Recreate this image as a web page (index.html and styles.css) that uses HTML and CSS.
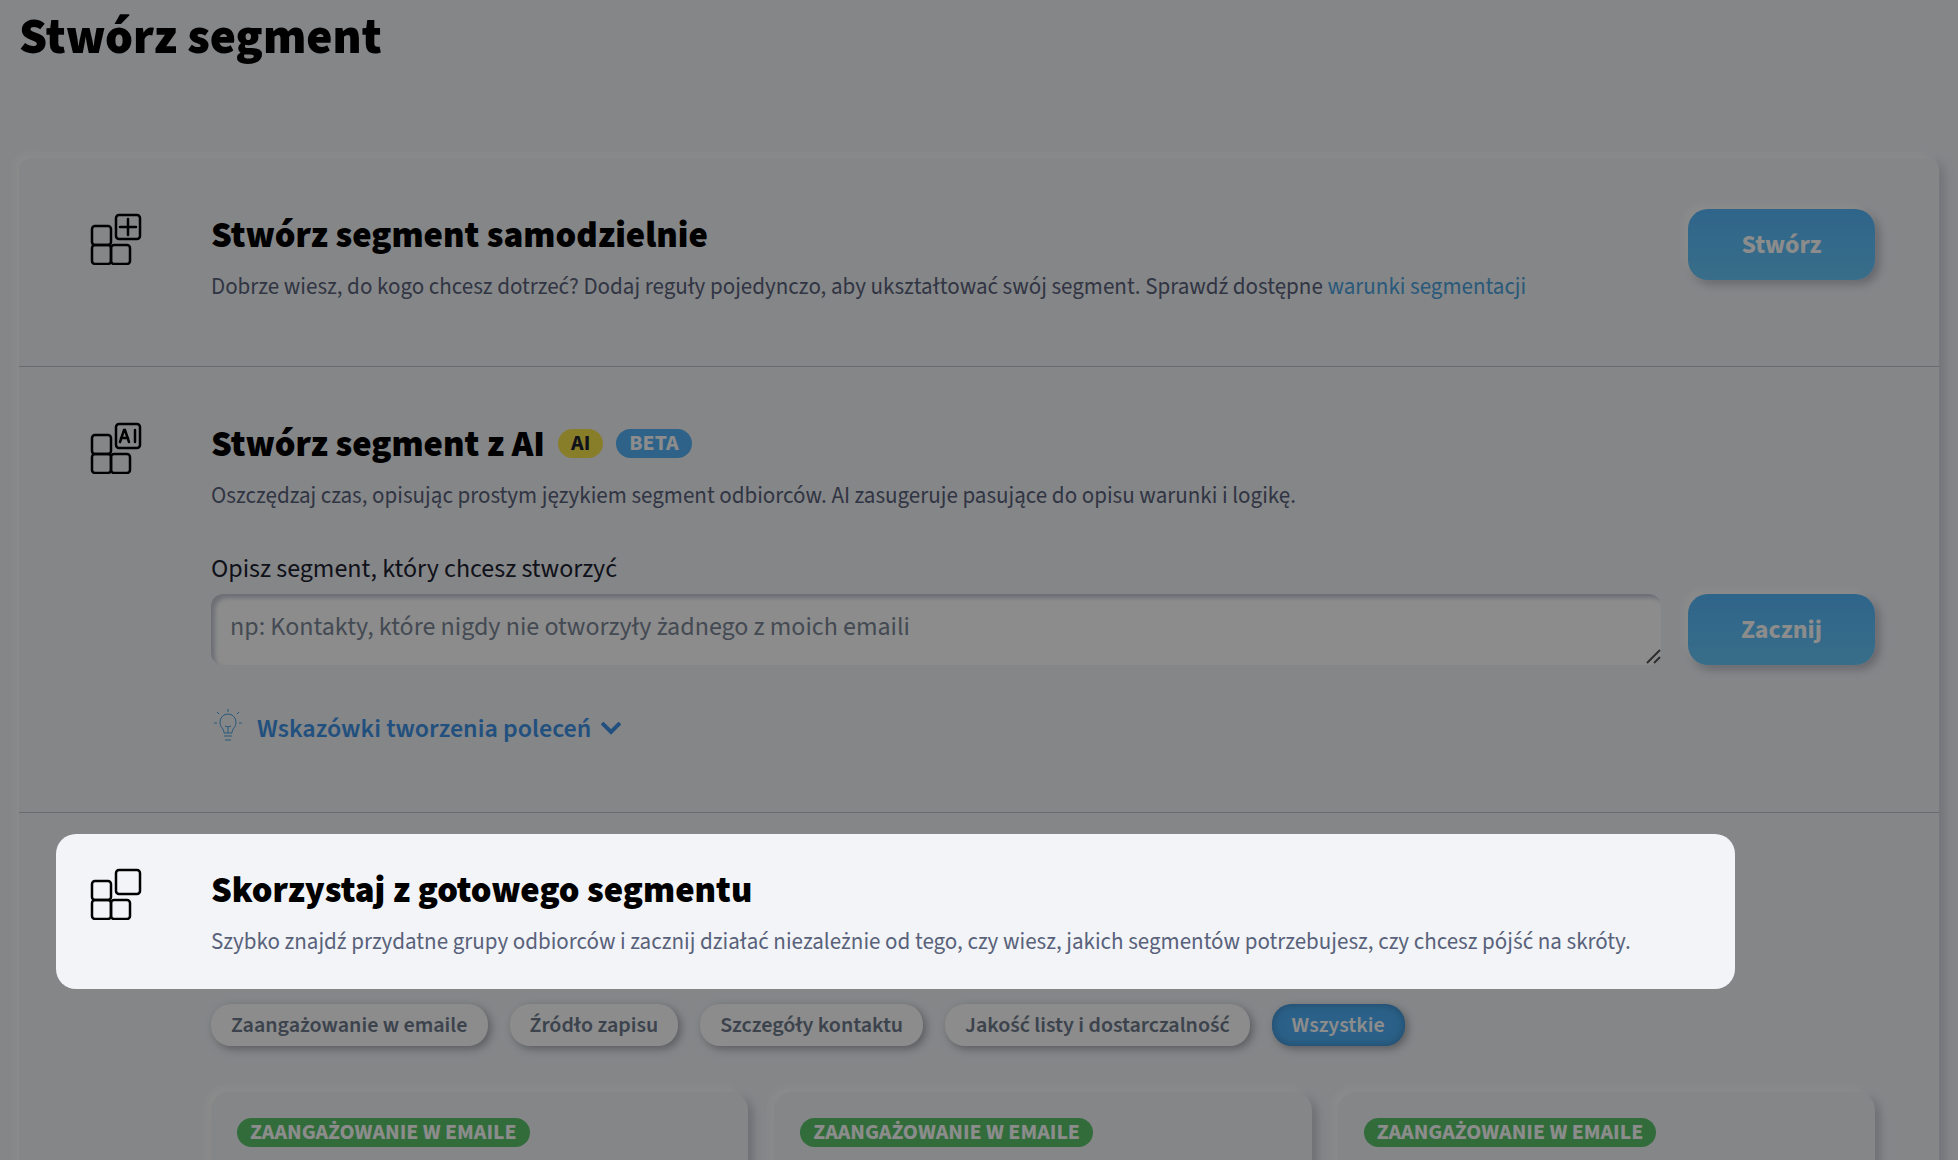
FILE: index.html
```html
<!DOCTYPE html>
<html lang="pl">
  <head>
    <meta charset="utf-8">
    <title>Stwórz segment</title>
    <link rel="stylesheet" href="styles.css">
  </head>
  <body>
    <h1 class="page-title">Stwórz segment</h1>
    <main class="panel">
      <section class="option">
        <svg class="option-icon" viewBox="0 0 52 52" aria-hidden="true">
          <rect x="2" y="13" width="19" height="19" rx="3"/>
          <rect x="2" y="32" width="19" height="19" rx="3"/>
          <rect x="21" y="32" width="19" height="19" rx="3"/>
          <rect x="26" y="2" width="24" height="24" rx="3"/>
          <path d="M38 6v16M30 14h16"/>
        </svg>
        <div class="option-text">
          <h2>Stwórz segment samodzielnie</h2>
          <p>Dobrze wiesz, do kogo chcesz dotrzeć? Dodaj reguły pojedynczo, aby ukształtować swój segment. Sprawdź dostępne <a href="#">warunki segmentacji</a></p>
        </div>
        <button class="button" type="button">Stwórz</button>
      </section>

      <section class="option option-ai">
        <svg class="option-icon" viewBox="0 0 52 52" aria-hidden="true">
          <rect x="2" y="13" width="19" height="19" rx="3"/>
          <rect x="2" y="32" width="19" height="19" rx="3"/>
          <rect x="21" y="32" width="19" height="19" rx="3"/>
          <rect x="26" y="2" width="24" height="24" rx="3"/>
          <path d="M30 20l4-12h1l4 12M31 16h7M45 8v12"/>
        </svg>
        <div class="option-text">
          <h2>Stwórz segment z AI <span class="tag tag-ai">AI</span> <span class="tag tag-beta">BETA</span></h2>
          <p>Oszczędzaj czas, opisując prostym językiem segment odbiorców. AI zasugeruje pasujące do opisu warunki i logikę.</p>
          <label class="field-label" for="segmentPrompt">Opisz segment, który chcesz stworzyć</label>
          <div class="prompt-row">
            <div class="prompt-box">
              <textarea class="prompt" id="segmentPrompt" rows="1" placeholder="np: Kontakty, które nigdy nie otworzyły żadnego z moich emaili"></textarea>
              <svg class="grip" viewBox="0 0 16 16" aria-hidden="true"><path d="M2 14L15 1M9 14l6-6"/></svg>
            </div>
            <button class="button" type="button">Zacznij</button>
          </div>
          <button class="tips" type="button">
            <svg class="bulb" viewBox="0 0 32 34" aria-hidden="true">
              <path d="M13 24c0-5-4-5-4-11a8 8 0 0 1 16 0c0 6-4 6-4 11zM13 27h8M14 31h6M17 24v-6M14 17l3 1 3-1M17 0v3M6 3l2 2M28 3l-2 2M3 14h3M28 14h3"/>
            </svg>
            Wskazówki tworzenia poleceń
            <svg class="chevron" viewBox="0 0 20 14" aria-hidden="true"><path d="M1 1l9 9 9-9"/></svg>
          </button>
        </div>
      </section>

      <section class="option option-ready">
        <svg class="option-icon" viewBox="0 0 52 52" aria-hidden="true">
          <rect x="2" y="13" width="19" height="19" rx="3"/>
          <rect x="2" y="32" width="19" height="19" rx="3"/>
          <rect x="21" y="32" width="19" height="19" rx="3"/>
          <rect x="26" y="2" width="24" height="24" rx="3"/>
        </svg>
        <div class="option-text">
          <h2>Skorzystaj z gotowego segmentu</h2>
          <p>Szybko znajdź przydatne grupy odbiorców i zacznij działać niezależnie od tego, czy wiesz, jakich segmentów potrzebujesz, czy chcesz pójść na skróty.</p>
          <div class="filters">
            <button class="chip" type="button">Zaangażowanie w emaile</button>
            <button class="chip" type="button">Źródło zapisu</button>
            <button class="chip" type="button">Szczegóły kontaktu</button>
            <button class="chip" type="button">Jakość listy i dostarczalność</button>
            <button class="chip chip-active" type="button">Wszystkie</button>
          </div>
          <div class="cards">
            <article class="card"><span class="tag tag-category">ZAANGAŻOWANIE W EMAILE</span></article>
            <article class="card"><span class="tag tag-category">ZAANGAŻOWANIE W EMAILE</span></article>
            <article class="card"><span class="tag tag-category">ZAANGAŻOWANIE W EMAILE</span></article>
          </div>
        </div>
        <div class="spotlight"></div>
      </section>
    </main>
  </body>
</html>
```

FILE: styles.css
```css
*{
  box-sizing: border-box;
}
body{
  margin: 0;
  padding: 0 19px;
  height: 100vh;
  overflow: hidden;
  background-color: #f2f4f8;
  color: #1c2230;
  font-family: "Source Sans Pro", "Source Sans 3", "Noto Sans", sans-serif;
  font-size: 26px;
}
h1, h2, p{
  margin: 0;
}
button, textarea{
  font-family: inherit;
}
.page-title{
  color: black;
  font-size: 50px;
  font-weight: 900;
  line-height: 76px;
  margin-bottom: 82px;
}

.panel{
  border-radius: 12px;
  box-shadow: -4px -4px 8px #fff, 4px 4px 12px #c3c7d3;
}
.option{
  position: relative;
  display: flex;
  align-items: flex-start;
  min-height: 209px;
  padding: 51px 64px 0 71px;
  border-bottom: 1px solid #c0c3c9;
}
.option-ai{
  min-height: 446px;
}
.option-ready{
  border-bottom: none;
}
.option-icon{
  flex: none;
  width: 52px;
  height: 52px;
  margin: 4px 69px 0 0;
  fill: none;
  stroke: black;
  stroke-width: 2.500;
  stroke-linecap: round;
}
.option-text{
  flex: 1;
}
h2{
  display: flex;
  align-items: center;
  gap: 13px;
  color: black;
  font-size: 37px;
  font-weight: 900;
  line-height: 54px;
}
h2 .tag{
  margin-bottom: 4px;
}
p{
  color: #59627a;
  font-size: 23px;
  line-height: 32px;
  margin-top: 8px;
}
a{
  color: #4ba3df;
  text-decoration: none;
}

.button{
  flex: none;
  height: 71px;
  min-width: 187px;
  padding: 0 50px;
  border: none;
  border-radius: 20px;
  background: linear-gradient(#56b8fb, #67c8fa);
  box-shadow: -4px -4px 8px #fff, 4px 4px 10px #b4b6c2;
  color: white;
  font-size: 26px;
  font-weight: bold;
  cursor: pointer;
}
.tag{
  padding: 0 13px;
  border-radius: 15px;
  font-size: 22px;
  font-weight: bold;
  line-height: 29px;
}
.tag-ai{
  background-color: #f7e64c;
  color: #1c2230;
}
.tag-beta{
  background-color: #56b3f8;
  color: white;
}
.tag-category{
  background-color: #5bc56c;
  color: white;
}

.field-label{
  display: block;
  margin-top: 39px;
  line-height: 36px;
}
.prompt-row{
  display: flex;
  gap: 27px;
  margin-top: 7px;
}
.prompt-box{
  position: relative;
  flex: 1;
}
.prompt{
  display: block;
  width: 100%;
  height: 71px;
  padding: 15px 19px;
  border: none;
  border-radius: 12px;
  background-color: white;
  box-shadow: inset 4px 4px 4px #c6cad6;
  font-size: 26px;
  line-height: 36px;
  resize: none;
}
.prompt::placeholder{
  color: #7c8797;
}
.grip{
  position: absolute;
  right: 0;
  bottom: 0;
  width: 16px;
  height: 16px;
  fill: none;
  stroke: #555;
  stroke-width: 2;
}
.tips{
  display: flex;
  align-items: center;
  margin-top: 44px;
  padding: 0;
  border: none;
  background: none;
  color: #3f93e6;
  font-size: 26px;
  font-weight: 600;
  line-height: 36px;
  cursor: pointer;
}
.bulb, .chevron{
  fill: none;
  stroke: currentColor;
}
.bulb{
  width: 32px;
  height: 34px;
  margin: 0 14px 5px 0;
  stroke: #4ba3df;
}
.chevron{
  width: 20px;
  height: 14px;
  margin-left: 10px;
  stroke-width: 4;
}

.filters{
  display: flex;
  flex-wrap: wrap;
  gap: 22px;
  margin-top: 46px;
}
.chip{
  height: 42px;
  padding: 0 20px;
  border: none;
  border-radius: 20px;
  background-color: white;
  box-shadow: 3px 3px 8px #a5a7ae;
  color: #6d7a8c;
  font-size: 22px;
  font-weight: 600;
  cursor: pointer;
}
.chip-active{
  background-color: #4fb0f7;
  box-shadow: inset 0 0 10px #3b83bc, 3px 3px 8px #a5a7ae;
  color: white;
}
.cards{
  display: grid;
  grid-template-columns: repeat(3, 1fr);
  gap: 26px;
  margin-top: 46px;
}
.card{
  display: flex;
  align-items: flex-start;
  min-height: 240px;
  padding: 26px;
  border-radius: 18px;
  box-shadow: -4px -4px 10px #fff, 4px 4px 10px #b9bdca;
}

/* dims everything except the highlighted option */
.spotlight{
  position: absolute;
  top: 21px;
  left: 37px;
  right: 204px;
  height: 155px;
  border-radius: 20px;
  box-shadow: 0 0 0 3000px rgba(0, 0, 0, .45);
  pointer-events: none;
}
```
